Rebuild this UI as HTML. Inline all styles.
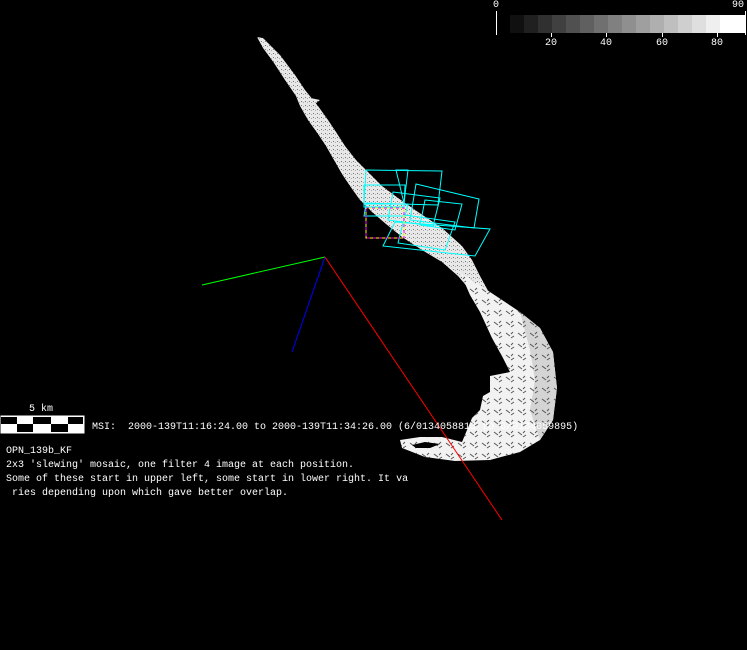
<!DOCTYPE html>
<html><head><style>
html,body{margin:0;padding:0;background:#000;width:747px;height:650px;overflow:hidden}
.t{position:absolute;color:#fff;font-family:"Liberation Mono",monospace;font-size:10px;line-height:10px;white-space:pre}
</style></head><body>
<svg width="747" height="650" style="position:absolute;left:0;top:0" xmlns="http://www.w3.org/2000/svg">
<defs>
<pattern id="sp" width="4" height="4" patternUnits="userSpaceOnUse">
<rect width="4" height="4" fill="#e8e8e8"/><rect x="1" y="1" width="1" height="1" fill="#777"/><rect x="3" y="2" width="1" height="1" fill="#aaa"/>
</pattern>
<pattern id="ds" width="12" height="11" patternUnits="userSpaceOnUse">
<path d="M2 3 l4 3 M7 8 l3 -2 M9 2 l-2 2" stroke="#555" stroke-width="1"/>
</pattern>
</defs>
<g>
<rect x="510" y="15" width="14" height="18" fill="#101010"/>
<rect x="524" y="15" width="14" height="18" fill="#202020"/>
<rect x="538" y="15" width="14" height="18" fill="#303030"/>
<rect x="552" y="15" width="14" height="18" fill="#404040"/>
<rect x="566" y="15" width="14" height="18" fill="#505050"/>
<rect x="580" y="15" width="14" height="18" fill="#606060"/>
<rect x="594" y="15" width="14" height="18" fill="#707070"/>
<rect x="608" y="15" width="14" height="18" fill="#808080"/>
<rect x="622" y="15" width="14" height="18" fill="#8f8f8f"/>
<rect x="636" y="15" width="14" height="18" fill="#9f9f9f"/>
<rect x="650" y="15" width="14" height="18" fill="#afafaf"/>
<rect x="664" y="15" width="14" height="18" fill="#bfbfbf"/>
<rect x="678" y="15" width="14" height="18" fill="#cfcfcf"/>
<rect x="692" y="15" width="14" height="18" fill="#dfdfdf"/>
<rect x="706" y="15" width="14" height="18" fill="#efefef"/>
<rect x="720" y="15" width="25" height="18" fill="#fff"/>
<line x1="496.5" y1="11" x2="496.5" y2="35" stroke="#fff"/>
<line x1="745.5" y1="11" x2="745.5" y2="35" stroke="#fff"/>
<line x1="551.5" y1="33" x2="551.5" y2="37" stroke="#fff"/>
<line x1="606.5" y1="33" x2="606.5" y2="37" stroke="#fff"/>
<line x1="662.5" y1="33" x2="662.5" y2="37" stroke="#fff"/>
<line x1="717.5" y1="33" x2="717.5" y2="37" stroke="#fff"/>
</g>
<polygon fill="url(#sp)" points="257,37 263,38 280,55 295,75 305,90 318,106 328,120 336,132 345,146 356,160 368,172 382,186 398,198 418,212 442,228 462,246 472,260 480,276 492,298 480,302 470,290 458,276 442,262 422,250 402,237 386,224 372,212 360,200 350,186 342,174 334,160 326,146 318,134 308,120 300,106 296,96 285,80 274,63 263,48"/>
<polygon fill="url(#sp)" points="296,95 320,100 315,104"/>
<polygon fill="url(#sp)" points="298,85 310,103 300,103"/>
<polygon fill="#f2f2f2" points="460,272 490,292 520,312 540,328 553,352 557,388 553,420 540,440 520,452 490,460 455,461 425,457 402,448 400,440 420,437 442,437 462,442 472,418 480,410 483,396 490,392 490,376 510,372 503,358 492,338 480,312 470,295"/>
<polygon fill="#d4d4d4" points="520,312 540,328 553,352 557,388 553,420 540,440 530,410 535,380 530,350"/>
<polygon fill="url(#ds)" points="460,272 490,292 520,312 540,328 553,352 557,388 553,420 540,440 520,452 490,460 455,461 425,457 402,448 400,440 420,437 442,437 462,442 472,418 480,410 483,396 490,392 490,376 510,372 503,358 492,338 480,312 470,295"/>
<polygon fill="#000" points="412,445 425,442 440,444 430,448 416,448"/>
<line x1="202" y1="285" x2="325" y2="257" stroke="#00ff00"/>
<line x1="325" y1="257" x2="292" y2="352" stroke="#0000ff"/>
<line x1="325" y1="257" x2="502" y2="520" stroke="#ff0000"/>
<g fill="none" stroke="#00ffff" stroke-width="1">
<polygon points="366,170 442,171 438,205 364,203"/>
<polygon points="396,170 408,170 404,203"/>
<polygon points="364,185 405,185 404,207 364,207"/>
<polygon points="366,204 408,204 405,216 364,216"/>
<polygon points="416,184 479,199 474,228 410,220"/>
<polygon points="393,192 440,198 433,226 388,220"/>
<polygon points="425,200 462,204 455,230 420,225"/>
<polygon points="395,222 490,229 475,256 383,246"/>
<polygon points="405,215 455,222 445,250 398,243"/>
</g>
<polygon fill="none" stroke="#ff00ff" stroke-dasharray="3,3" points="366,208 404,208 404,238 366,238"/>
<polygon fill="none" stroke="#ffff00" stroke-dasharray="3,3" stroke-dashoffset="3" points="366,208 404,208 404,238 366,238"/>
<rect x="0.5" y="415.5" width="84" height="18" fill="#fff"/>
<rect x="1" y="417" width="16" height="7" fill="#000"/>
<rect x="33" y="417" width="18" height="7" fill="#000"/>
<rect x="68" y="417" width="15" height="7" fill="#000"/>
<rect x="17" y="424" width="16" height="8" fill="#000"/>
<rect x="51" y="424" width="17" height="8" fill="#000"/>
</svg>
<div class="t" style="left:493px;top:1px">0</div>
<div class="t" style="left:732px;top:1px">90</div>
<div class="t" style="left:545px;top:39px">20</div>
<div class="t" style="left:600px;top:39px">40</div>
<div class="t" style="left:656px;top:39px">60</div>
<div class="t" style="left:711px;top:39px">80</div>
<div class="t" style="left:29px;top:405px">5 km</div>
<div class="t" style="left:92px;top:423px;letter-spacing:0px">MSI:  2000-139T11:16:24.00 to 2000-139T11:34:26.00 (6/0134058813 to 6/0134059895)</div>
<div class="t" style="left:6px;top:447px">OPN_139b_KF</div>
<div class="t" style="left:6px;top:461px">2x3 'slewing' mosaic, one filter 4 image at each position.</div>
<div class="t" style="left:6px;top:475px">Some of these start in upper left, some start in lower right. It va</div>
<div class="t" style="left:6px;top:489px"> ries depending upon which gave better overlap.</div>
</body></html>
